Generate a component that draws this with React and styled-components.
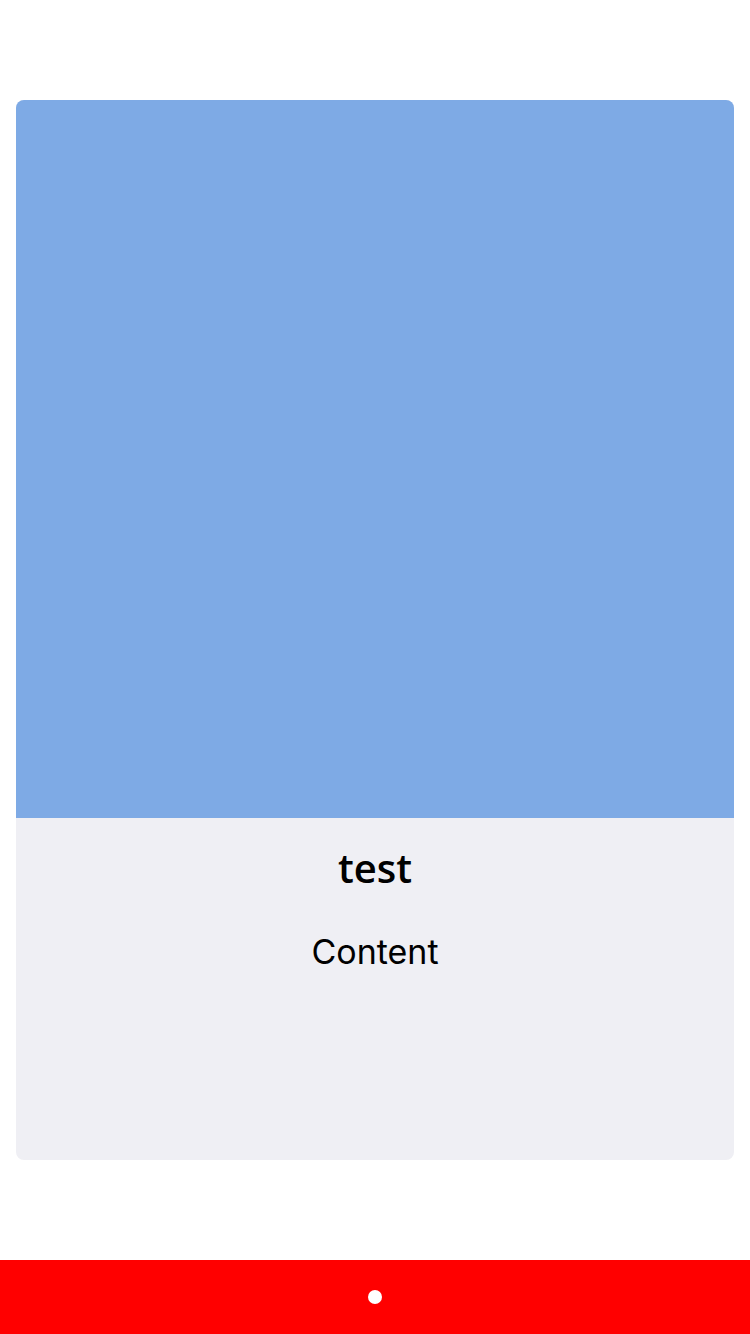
import React from 'react';
import styled, { createGlobalStyle } from 'styled-components';

const GlobalStyle = createGlobalStyle`
  html, body {
    margin: 0;
    padding: 0;
    background: #ffffff;
  }
  body {
    font-family: Inter, "Liberation Sans", sans-serif;
  }
`;

// Full page column
const Page = styled.div`
  width: 750px;
  height: 1334px;
  display: flex;
  flex-direction: column;
  box-sizing: border-box;
`;

const Slide = styled.div`
  flex: 1;
  padding: 100px 16px 100px;
  display: flex;
`;

// Card with image area and body
const Card = styled.div`
  flex: 1;
  display: flex;
  flex-direction: column;
  border-radius: 8px;
  overflow: hidden;
  background: #efeff4;
`;

const Cover = styled.div`
  height: 718px;
  background: #7eaae5;
`;

const Body = styled.div`
  display: flex;
  flex-direction: column;
  align-items: center;
  padding-top: 26px;
`;

const Title = styled.h2`
  margin: 0;
  font-family: "Open Sans", sans-serif;
  font-weight: 600;
  font-size: 40px;
  line-height: 48px;
  color: #000;
`;

const Text = styled.p`
  margin: 40px 0 0;
  font-family: Inter, sans-serif;
  font-size: 34px;
  line-height: 40px;
  color: #000;
`;

// Bottom pager bar
const Pager = styled.div`
  height: 74px;
  background: #ff0000;
  display: flex;
  align-items: center;
  justify-content: center;
  gap: 12px;
`;

const Dot = styled.span`
  width: 14px;
  height: 14px;
  border-radius: 50%;
  background: ${(p) => (p.active ? '#ffffff' : 'rgba(255,255,255,0.4)')};
`;

export default function App() {
  return (
    <>
      <GlobalStyle />
      <Page>
        <Slide>
          <Card>
            <Cover />
            <Body>
              <Title>test</Title>
              <Text>Content</Text>
            </Body>
          </Card>
        </Slide>
        <Pager>
          <Dot active />
        </Pager>
      </Page>
    </>
  );
}
